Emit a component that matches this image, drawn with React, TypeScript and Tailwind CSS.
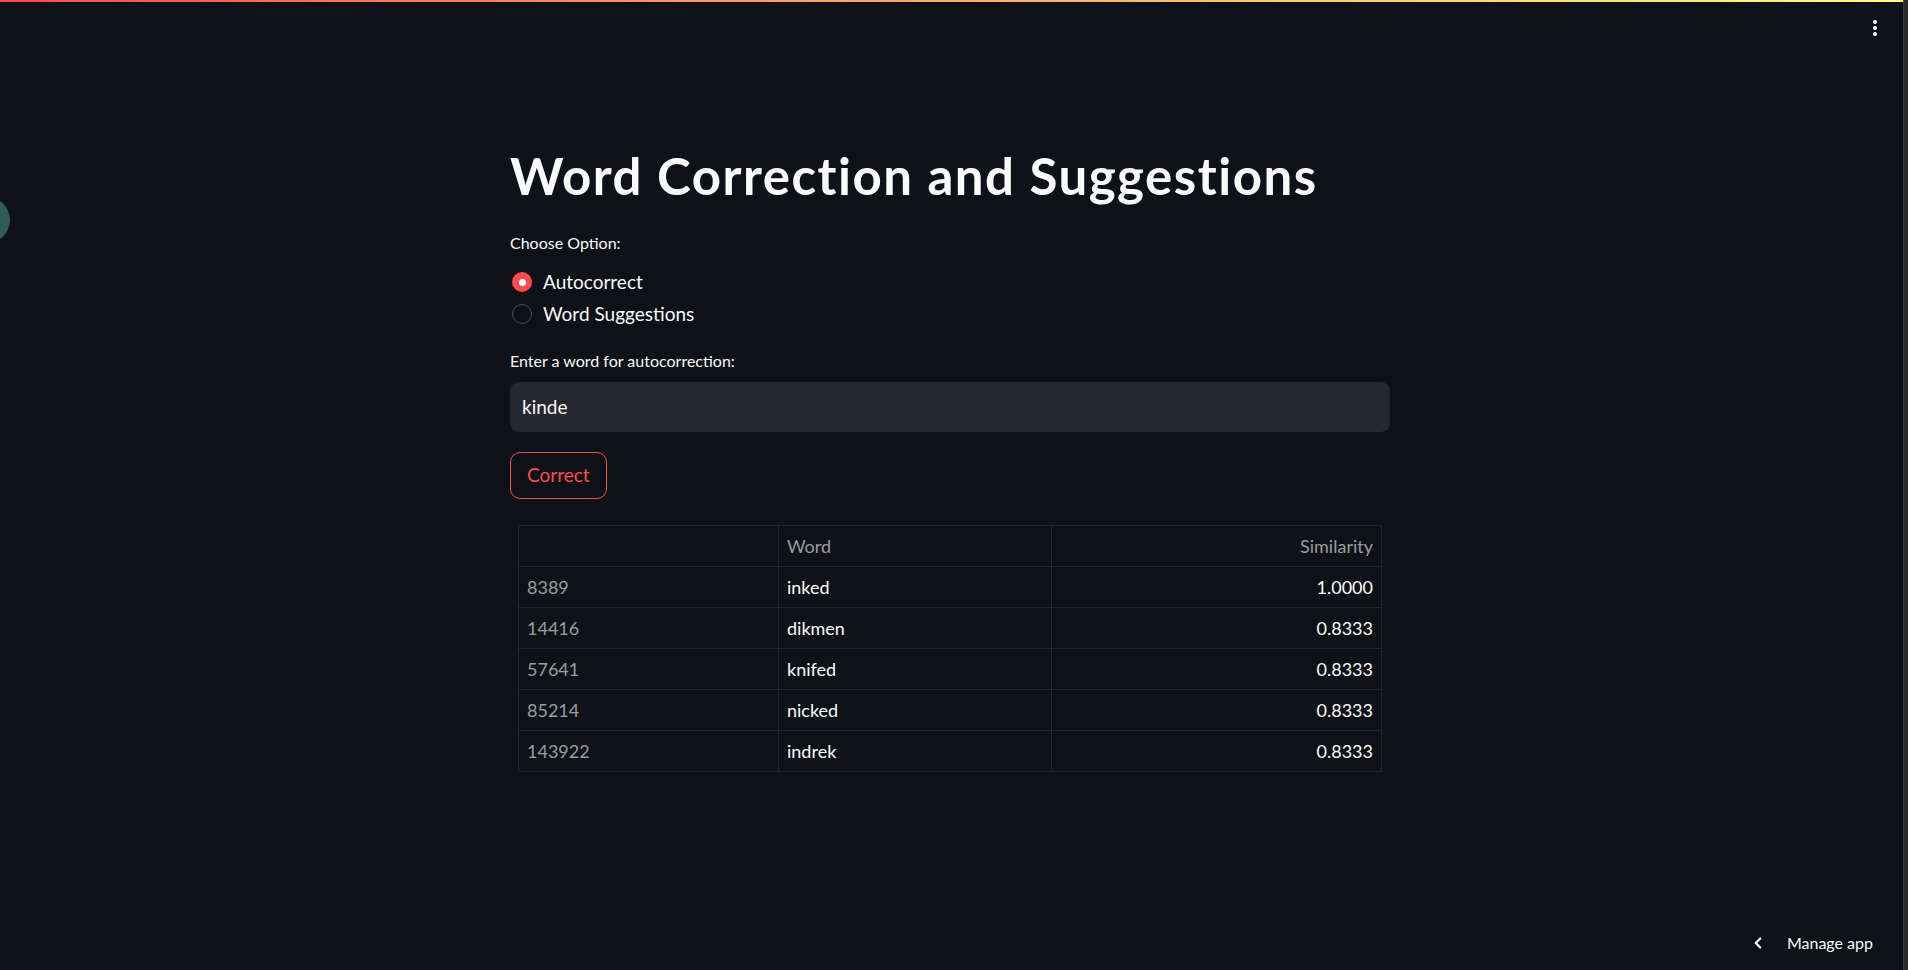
import { ChevronLeft } from "lucide-react";

const rows = [
  { idx: "8389", word: "inked", sim: "1.0000" },
  { idx: "14416", word: "dikmen", sim: "0.8333" },
  { idx: "57641", word: "knifed", sim: "0.8333" },
  { idx: "85214", word: "nicked", sim: "0.8333" },
  { idx: "143922", word: "indrek", sim: "0.8333" },
];

function Radio({ checked, label }: { checked: boolean; label: string }) {
  return (
    <label className="flex items-center h-[32px] gap-[11px] cursor-pointer">
      {checked ? (
        <span className="w-[20px] h-[20px] rounded-full bg-[#ff4b4b] flex items-center justify-center">
          <span className="w-[7px] h-[7px] rounded-full bg-white" />
        </span>
      ) : (
        <span className="w-[20px] h-[20px] rounded-full border border-[#4b4c55]" />
      )}
      <span className="text-[19px] text-[#fafafa]">{label}</span>
    </label>
  );
}

export default function App() {
  return (
    <div
      className="relative flex h-[970px] w-full overflow-hidden bg-[#0e1117] text-[#fafafa]"
      style={{ fontFamily: '"Lato", "Noto Sans", sans-serif' }}
    >
      <div className="absolute top-0 left-0 right-[5px] h-[2px] bg-gradient-to-r from-[#ff4b4b] to-[#fffd80]" />

      {/* sidebar toggle blob */}
      <div className="absolute left-[-36px] top-[197px] w-[46px] h-[46px] rounded-full bg-[#2f5d51]" />

      {/* top-right menu */}
      <div className="absolute right-[31px] top-[20px] flex flex-col gap-[2px]">
        <span className="w-[4px] h-[4px] rounded-full bg-white" />
        <span className="w-[4px] h-[4px] rounded-full bg-white" />
        <span className="w-[4px] h-[4px] rounded-full bg-white" />
      </div>

      <main className="flex-1 flex justify-center pr-[3px]">
        <div className="w-[880px] pt-[141px]">
          <h1 className="text-[51px] leading-[70px] font-bold tracking-[1.5px]">
            Word Correction and Suggestions
          </h1>

          <p className="mt-[22px] text-[16px] leading-[20px]">Choose Option:</p>
          <div className="mt-[13px] flex flex-col pl-[2px]">
            <Radio checked label="Autocorrect" />
            <Radio checked={false} label="Word Suggestions" />
          </div>

          <p className="mt-[21px] text-[16px] leading-[20px]">Enter a word for autocorrection:</p>
          <div className="mt-[11px] h-[50px] rounded-[9px] bg-[#262730] flex items-center px-[12px]">
            <span className="text-[19px]">kinde</span>
          </div>

          <button className="mt-[20px] h-[47px] px-[16px] rounded-[10px] border border-[#ff4b4b] text-[#ff4b4b] text-[19px]">
            Correct
          </button>

          <div className="mt-[26px] mx-[8px] border border-[#24262d]">
            <div className="grid grid-cols-[260px_273px_1fr] h-[40px] items-center text-[18px] text-[#fafafa99]">
              <div className="h-full border-r border-[#24262d]" />
              <div className="h-full flex items-center px-[8px] border-r border-[#24262d]">Word</div>
              <div className="h-full flex items-center justify-end px-[8px]">Similarity</div>
            </div>
            {rows.map((r) => (
              <div
                key={r.idx}
                className="grid grid-cols-[260px_273px_1fr] h-[41px] items-center text-[18px] border-t border-[#24262d]"
              >
                <div className="h-full flex items-center px-[8px] border-r border-[#24262d] text-[#fafafa99]">
                  {r.idx}
                </div>
                <div className="h-full flex items-center px-[8px] border-r border-[#24262d]">{r.word}</div>
                <div className="h-full flex items-center justify-end px-[8px]">{r.sim}</div>
              </div>
            ))}
          </div>
        </div>
      </main>

      {/* manage app */}
      <div className="absolute right-[35px] bottom-[15px] flex items-center gap-[20px] text-[16px]">
        <ChevronLeft className="w-[18px] h-[18px]" strokeWidth={3} />
        <span>Manage app</span>
      </div>

      {/* window edge */}
      <div className="w-[5px] h-full bg-[#2a2a2a] border-l border-[#3a3a3a]" />
    </div>
  );
}
